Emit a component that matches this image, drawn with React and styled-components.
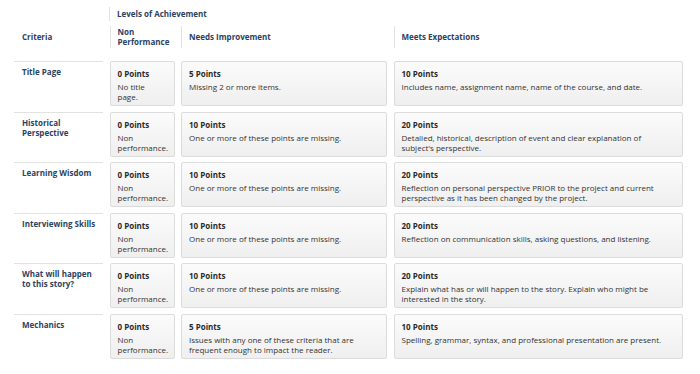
import React from "react";
import styled, { createGlobalStyle } from "styled-components";

const GlobalStyle = createGlobalStyle`
  body {
    margin: 0;
    background: #fff;
    font-family: "Open Sans", "Liberation Sans", sans-serif;
  }
`;

const rows = [
  {
    criteria: "Title Page",
    levels: [
      { points: "0 Points", text: "No title page." },
      { points: "5 Points", text: "Missing 2 or more items." },
      { points: "10 Points", text: "Includes name, assignment name, name of the course, and date." },
    ],
  },
  {
    criteria: "Historical Perspective",
    levels: [
      { points: "0 Points", text: "Non performance." },
      { points: "10 Points", text: "One or more of these points are missing." },
      { points: "20 Points", text: "Detailed, historical, description of event and clear explanation of subject's perspective." },
    ],
  },
  {
    criteria: "Learning Wisdom",
    levels: [
      { points: "0 Points", text: "Non performance." },
      { points: "10 Points", text: "One or more of these points are missing." },
      { points: "20 Points", text: "Reflection on personal perspective PRIOR to the project and current perspective as it has been changed by the project." },
    ],
  },
  {
    criteria: "Interviewing Skills",
    levels: [
      { points: "0 Points", text: "Non performance." },
      { points: "10 Points", text: "One or more of these points are missing." },
      { points: "20 Points", text: "Reflection on communication skills, asking questions, and listening." },
    ],
  },
  {
    criteria: "What will happen to this story?",
    levels: [
      { points: "0 Points", text: "Non performance." },
      { points: "10 Points", text: "One or more of these points are missing." },
      { points: "20 Points", text: "Explain what has or will happen to the story. Explain who might be interested in the story." },
    ],
  },
  {
    criteria: "Mechanics",
    levels: [
      { points: "0 Points", text: "Non performance." },
      { points: "5 Points", text: "Issues with any one of these criteria that are frequent enough to impact the reader." },
      { points: "10 Points", text: "Spelling, grammar, syntax, and professional presentation are present." },
    ],
  },
];

const COLUMNS = "89px 65px 206px 289px";

const Rubric = styled.div`
  padding: 7px 0 0 14px;
  width: 700px;
  box-sizing: border-box;
`;

const LevelsRow = styled.div`
  display: grid;
  grid-template-columns: 89px auto;
  column-gap: 6px;
  height: 19px;
`;

const HeaderRow = styled.div`
  display: grid;
  grid-template-columns: ${COLUMNS};
  column-gap: 6.5px;
  height: 35px;
`;

const HeadCell = styled.div`
  font-size: 8px;
  font-weight: 700;
  color: #2c4262;
  line-height: 10px;
  padding-left: ${(p) => (p.$plain ? "8px" : "7px")};
  border-left: ${(p) => (p.$plain ? "none" : "1px solid #e2e2e2")};
  display: flex;
  align-items: ${(p) => (p.$top ? "flex-start" : "center")};
  height: ${(p) => (p.$top ? "14px" : "22px")};
  padding-top: ${(p) => (p.$top ? "2px" : "0")};
  box-sizing: border-box;
`;

const Row = styled.div`
  display: grid;
  grid-template-columns: ${COLUMNS};
  column-gap: 6.5px;
  height: 45px;
  margin-bottom: 5.6px;
`;

const Criteria = styled.div`
  border-top: 1px solid #e2e2e2;
  padding: 5px 1px 0 8px;
  font-size: 8px;
  font-weight: 700;
  color: #2c4262;
  line-height: 10px;
`;

const Card = styled.div`
  border: 1px solid #dcdcdc;
  border-radius: 2px;
  background: linear-gradient(#fbfbfb, #efefef);
  padding: 6px 7px 0;
  box-sizing: border-box;
  color: #2a2a2a;
`;

const Points = styled.div`
  font-size: 8px;
  font-weight: 700;
  line-height: 11px;
  margin-bottom: 3px;
`;

const Description = styled.div`
  font-size: 8px;
  line-height: 10px;
  color: #333;
`;

export default function App() {
  return (
    <>
      <GlobalStyle />
      <Rubric>
        <LevelsRow>
          <div />
          <HeadCell $top>Levels of Achievement</HeadCell>
        </LevelsRow>
        <HeaderRow>
          <HeadCell $plain>Criteria</HeadCell>
          <HeadCell>Non<br />Performance</HeadCell>
          <HeadCell>Needs Improvement</HeadCell>
          <HeadCell>Meets Expectations</HeadCell>
        </HeaderRow>
        {rows.map((row) => (
          <Row key={row.criteria}>
            <Criteria>{row.criteria}</Criteria>
            {row.levels.map((level) => (
              <Card key={level.points + level.text}>
                <Points>{level.points}</Points>
                <Description>{level.text}</Description>
              </Card>
            ))}
          </Row>
        ))}
      </Rubric>
    </>
  );
}
